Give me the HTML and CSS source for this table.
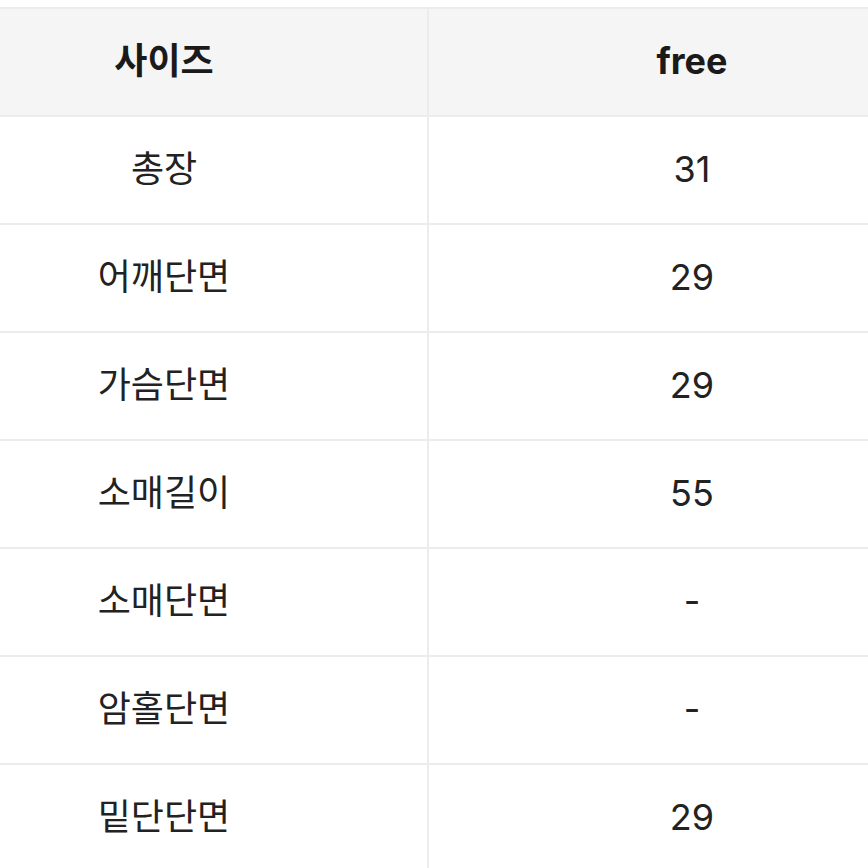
FILE: index.html
```html
<!DOCTYPE html>
<html lang="ko">
<head>
<meta charset="utf-8">
<link rel="stylesheet" href="styles.css">
</head>
<body>
<div class="frame">
<table class="size-table">
  <thead>
    <tr><th>사이즈</th><th>free</th></tr>
  </thead>
  <tbody>
    <tr><td>총장</td><td>31</td></tr>
    <tr><td>어깨단면</td><td>29</td></tr>
    <tr><td>가슴단면</td><td>29</td></tr>
    <tr><td>소매길이</td><td>55</td></tr>
    <tr><td>소매단면</td><td>-</td></tr>
    <tr><td>암홀단면</td><td>-</td></tr>
    <tr><td>밑단단면</td><td>29</td></tr>
  </tbody>
</table>
</div>
</body>
</html>
```
FILE: styles.css
```css
html, body {
  margin: 0;
  padding: 0;
  background: #ffffff;
}
.frame {
  width: 868px;
  height: 868px;
  overflow: hidden;
}
.size-table {
  margin-top: 7px;
  margin-left: -101px;
  width: 1058px;
  border-collapse: collapse;
  table-layout: fixed;
  font-family: "Inter", "Noto Sans CJK KR", sans-serif;
  font-size: 36px;
  color: #222222;
}
.size-table th,
.size-table td {
  border: 2px solid #ececec;
  text-align: center;
  vertical-align: middle;
  padding: 0;
  line-height: 1.2;
}
.size-table th {
  height: 106px;
  background: #f5f5f5;
  font-weight: 700;
  color: #1a1a1a;
}
.size-table td {
  height: 106px;
  font-weight: 400;
}
```
